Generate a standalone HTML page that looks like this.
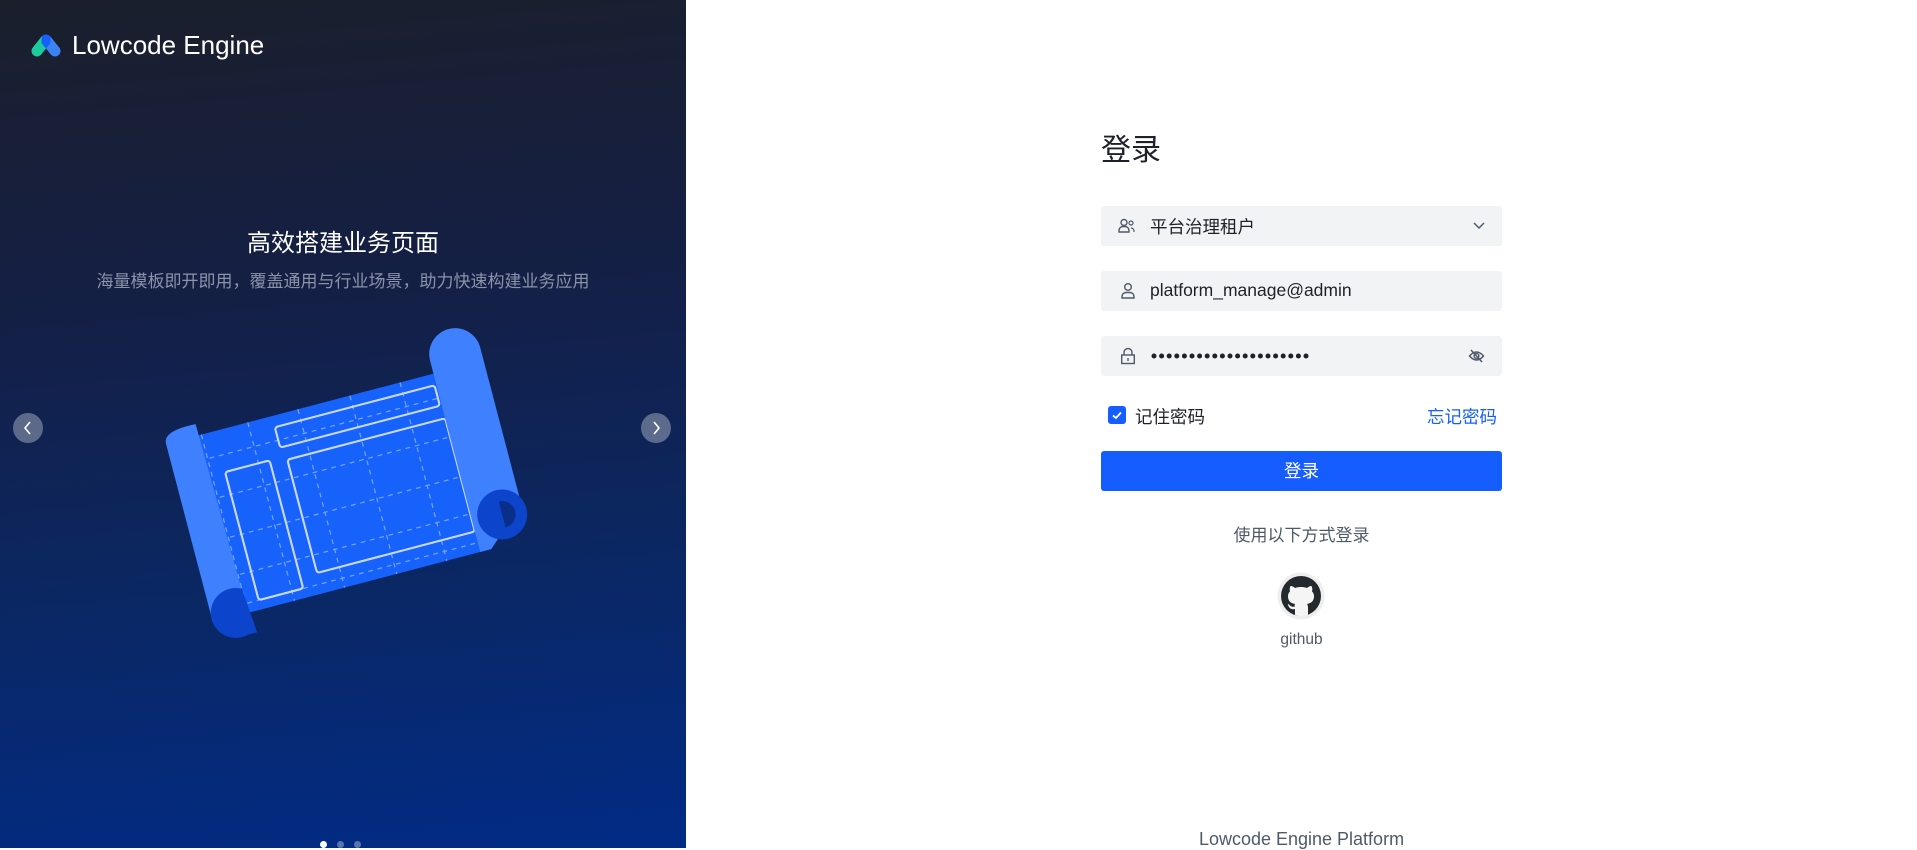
<!DOCTYPE html>
<html><head><meta charset="utf-8"><style>
*{margin:0;padding:0;box-sizing:border-box}
body{width:1917px;height:848px;overflow:hidden;font-family:"Liberation Sans","Noto Sans CJK SC",sans-serif;background:#fff;position:relative}
.left{position:absolute;left:0;top:0;width:686px;height:848px;background:linear-gradient(175deg,#1b1f2c 0%,#141f45 35%,#0a2866 70%,#022b86 100%)}
.abs{position:absolute}
.logo-t{left:72px;top:30px;font-size:26px;color:#fff;letter-spacing:0}
.t1{left:0;width:686px;text-align:center;top:223px;font-size:24px;color:#fff}
.t2{left:0;width:686px;text-align:center;top:267px;font-size:17px;color:#8a93a8}
.arr{width:30px;height:30px;border-radius:50%;background:rgba(255,255,255,0.32);top:413px}
.dot{width:7px;height:7px;border-radius:50%;top:841px;background:rgba(255,255,255,0.35)}
.box{left:1101px;width:401px;height:40px;background:#f2f3f5;border-radius:3px}
.txt{font-size:17.5px;color:#1d2129;left:1150px}
</style></head><body>
<div class="left">
<svg class="abs" style="left:28px;top:30px" width="40" height="30" viewBox="0 0 40 30">
<line x1="9" y1="21" x2="17" y2="11" stroke="#1ccc9e" stroke-width="11" stroke-linecap="round"/>
<line x1="19" y1="11" x2="27" y2="21" stroke="#3d82f5" stroke-width="11" stroke-linecap="round"/>
<path d="M18 4.5 a6 6 0 0 1 4.3 1.8 L22.5 13 L18 18.5 L13.5 13 L13.7 6.3 A6 6 0 0 1 18 4.5 Z" fill="#1560fa"/>
</svg>
<div class="abs logo-t">Lowcode Engine</div>
<div class="abs t1">高效搭建业务页面</div>
<div class="abs t2">海量模板即开即用，覆盖通用与行业场景，助力快速构建业务应用</div>
<div class="abs arr" style="left:13px"><svg width="30" height="30"><path d="M17 9 L12 15 L17 21" stroke="#fff" stroke-width="1.6" fill="none"/></svg></div>
<div class="abs arr" style="left:641px"><svg width="30" height="30"><path d="M13 9 L18 15 L13 21" stroke="#fff" stroke-width="1.6" fill="none"/></svg></div>
<div class="abs dot" style="left:320px;background:#fff"></div>
<div class="abs dot" style="left:337px"></div>
<div class="abs dot" style="left:354px"></div>
<svg class="abs" style="left:0;top:0" width="686" height="848">
<g transform="translate(338 494) rotate(-14.7) scale(0.96)">
<rect x="-140" y="-96" width="280" height="192" fill="#1662fb"/>
<g stroke="#8fb3ff" stroke-width="1.3" stroke-dasharray="5 5" opacity="0.8">
<line x1="-122" y1="-96" x2="-122" y2="96"/><line x1="-72" y1="-96" x2="-72" y2="96"/><line x1="-18" y1="-96" x2="-18" y2="96"/><line x1="38" y1="-96" x2="38" y2="96"/><line x1="92" y1="-96" x2="92" y2="96"/><line x1="130" y1="-96" x2="130" y2="96"/>
<line x1="-140" y1="-70" x2="140" y2="-70"/><line x1="-140" y1="-28" x2="140" y2="-28"/><line x1="-140" y1="15" x2="140" y2="15"/><line x1="-140" y1="55" x2="140" y2="55"/><line x1="-140" y1="86" x2="140" y2="86"/>
</g>
<g stroke="#c9d8ff" stroke-width="2.2" fill="none">
<rect x="-108" y="-52" width="48" height="138" rx="3"/>
<rect x="-46" y="-84" width="172" height="22" rx="3"/>
<rect x="-42" y="-48" width="170" height="122" rx="3"/>
</g>
<path d="M128 -110 a27 27 0 0 1 54 0 L182 58 L140 96 L128 96 Z" fill="#3f80ff"/>
<circle cx="160" cy="64" r="26" fill="#0d44cc"/>
<path d="M160 50 a14 14 0 0 1 0 28 Z" fill="#0a2f8a"/>
<path d="M-160 -96 Q-160 -110 -125 -108 L-122 96 L-160 96 Z" fill="#3f80ff"/>
<path d="M-122 70 A26 26 0 1 0 -128 118 L-118 118 Z" fill="#0d44cc"/>
</g>
</svg>
</div>

<div class="abs" style="left:1101px;top:125px;font-size:30px;color:#1d2129">登录</div>

<div class="abs box" style="top:206px"></div>
<svg class="abs" style="left:1118px;top:218px" width="18" height="16" viewBox="0 0 18 16"><circle cx="6" cy="4.5" r="3" stroke="#4e5969" stroke-width="1.4" fill="none"/><path d="M1 14 v-1.5 a4 4 0 0 1 4-4 h2 a4 4 0 0 1 4 4 V14 Z" stroke="#4e5969" stroke-width="1.4" fill="none"/><circle cx="13" cy="5" r="2" stroke="#4e5969" stroke-width="1.2" fill="none"/><path d="M13 10 a3 3 0 0 1 3 3 v1" stroke="#4e5969" stroke-width="1.2" fill="none"/></svg>
<div class="abs txt" style="top:214px;left:1150px">平台治理租户</div>
<svg class="abs" style="left:1472px;top:221px" width="14" height="10"><path d="M2 2 L7 7 L12 2" stroke="#4e5969" stroke-width="1.5" fill="none"/></svg>

<div class="abs box" style="top:271px"></div>
<svg class="abs" style="left:1120px;top:282px" width="16" height="18" viewBox="0 0 16 18"><circle cx="8" cy="5" r="3.3" stroke="#4e5969" stroke-width="1.4" fill="none"/><path d="M2 16 v-1.5 a4 4 0 0 1 4-4 h4 a4 4 0 0 1 4 4 V16 Z" stroke="#4e5969" stroke-width="1.4" fill="none"/></svg>
<div class="abs txt" style="top:280px">platform_manage@admin</div>

<div class="abs box" style="top:336px"></div>
<svg class="abs" style="left:1120px;top:347px" width="16" height="18" viewBox="0 0 16 18"><path d="M4 8 V5.5 a4 4 0 0 1 8 0 V8" stroke="#4e5969" stroke-width="1.4" fill="none"/><rect x="1.7" y="8" width="12.6" height="8.5" stroke="#4e5969" stroke-width="1.4" fill="none"/><line x1="8" y1="11" x2="8" y2="14" stroke="#4e5969" stroke-width="1.4"/></svg>
<svg class="abs" style="left:1151px;top:351px" width="170" height="10">
<g fill="#1d2129">
<circle cx="3" cy="5" r="2.5"/><circle cx="10.6" cy="5" r="2.5"/><circle cx="18.2" cy="5" r="2.5"/><circle cx="25.8" cy="5" r="2.5"/><circle cx="33.4" cy="5" r="2.5"/><circle cx="41" cy="5" r="2.5"/><circle cx="48.6" cy="5" r="2.5"/><circle cx="56.2" cy="5" r="2.5"/><circle cx="63.8" cy="5" r="2.5"/><circle cx="71.4" cy="5" r="2.5"/><circle cx="79" cy="5" r="2.5"/><circle cx="86.6" cy="5" r="2.5"/><circle cx="94.2" cy="5" r="2.5"/><circle cx="101.8" cy="5" r="2.5"/><circle cx="109.4" cy="5" r="2.5"/><circle cx="117" cy="5" r="2.5"/><circle cx="124.6" cy="5" r="2.5"/><circle cx="132.2" cy="5" r="2.5"/><circle cx="139.8" cy="5" r="2.5"/><circle cx="147.4" cy="5" r="2.5"/><circle cx="155" cy="5" r="2.5"/>
</g></svg>
<svg class="abs" style="left:1468px;top:348px" width="17" height="16" viewBox="0 0 17 16"><path d="M1.5 8 Q8.5 0 15.5 8 Q8.5 16 1.5 8 Z" stroke="#4e5969" stroke-width="1.5" fill="none"/><circle cx="8.5" cy="8" r="2.4" stroke="#4e5969" stroke-width="1.4" fill="none"/><line x1="3" y1="2" x2="14" y2="14" stroke="#4e5969" stroke-width="1.5"/></svg>

<div class="abs" style="left:1108px;top:406px;width:18px;height:18px;background:#165dff;border-radius:3px"><svg width="18" height="18"><path d="M5 9.5 L8 12 L13 6.5" stroke="#fff" stroke-width="1.8" fill="none"/></svg></div>
<div class="abs" style="left:1135px;top:404px;font-size:17.5px;color:#1d2129">记住密码</div>
<div class="abs" style="left:1427px;top:404px;font-size:17.5px;color:#165dff">忘记密码</div>

<div class="abs" style="left:1101px;top:451px;width:401px;height:40px;background:#165dff;border-radius:3px;color:#fff;font-size:17.5px;text-align:center;line-height:40px">登录</div>

<div class="abs" style="left:1101px;width:401px;text-align:center;top:521px;font-size:17px;color:#4e5969">使用以下方式登录</div>
<svg class="abs" style="left:1277px;top:572px" width="48" height="48" viewBox="0 0 48 48"><circle cx="24" cy="24" r="23.5" fill="#eeeeee"/><circle cx="24" cy="24" r="20" fill="#24292e"/>
<path d="M18 43 V37 C13 38 12 35 11 33 C10.5 32 11 31.8 12 32.5 C13.5 33.5 14 35.5 18 34.5 C17.5 33.5 17.5 33 18 32 C13 31 11 28.5 11 24 C11 22 11.8 20.5 13 19.5 C12.5 18 12.5 16 13.5 14 C15 14 16.5 14.8 18 16 C20 15.3 22 15 24 15 C26 15 28 15.3 30 16 C31.5 14.8 33 14 34.5 14 C35.5 16 35.5 18 35 19.5 C36.2 20.5 37 22 37 24 C37 28.5 35 31 30 32 C30.7 33 31 34 31 35.5 V43 A20 20 0 0 1 18 43 Z" fill="#f5f5f5"/></svg>
<div class="abs" style="left:1101px;width:401px;text-align:center;top:631px;font-size:15.5px;color:#4e5969">github</div>
<div class="abs" style="left:1101px;width:401px;text-align:center;top:829px;font-size:18px;color:#4e5969">Lowcode Engine Platform</div>
</body></html>
